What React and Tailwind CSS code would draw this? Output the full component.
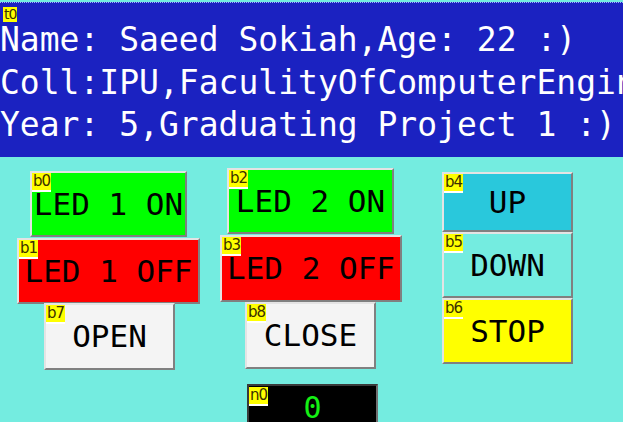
// Nextion-style HMI page: widgets sit at their own coordinates on the canvas

const MONO = "font-['DejaVu_Sans_Mono','Liberation_Mono',monospace]";

function Tag({ children, className = "" }) {
  return (
    <span
      className={`absolute bg-[#ffff00] border-b-2 border-white text-[#3b3000] text-[15px] leading-[17px] px-[1px] font-['DejaVu_Sans',sans-serif] tracking-[-1px] ${className}`}
    >
      {children}
    </span>
  );
}

function Btn({ tag, text, bg, pos }) {
  return (
    <div
      className={`absolute flex items-center justify-center border-2 border-t-[#e4e4e4] border-l-[#e4e4e4] border-r-[#808080] border-b-[#808080] ${bg} ${pos}`}
    >
      <Tag className="top-0 left-0">{tag}</Tag>
      <span className={`${MONO} text-[31px] leading-none text-black`}>{text}</span>
    </div>
  );
}

export default function App() {
  return (
    <div className="relative w-[623px] h-[422px] overflow-hidden bg-[#74ece0]">
      {/* t0 text panel */}
      <div className="absolute left-0 top-[2px] w-[623px] h-[155px] bg-[#1b22c1] border-t border-dotted border-[#9fb4ff] overflow-hidden">
        <Tag className="top-[4px] left-[3px] !text-[14px] !leading-[15px] !border-0">t0</Tag>
        <div className={`${MONO} text-[33px] leading-[42.5px] text-white whitespace-pre pt-[16px]`}>
          <div>Name: Saeed Sokiah,Age: 22 :)</div>
          <div>Coll:IPU,FaculityOfComputerEngineering</div>
          <div>Year: 5,Graduating Project 1 :)</div>
        </div>
      </div>

      <Btn tag="b0" text="LED 1 ON" bg="bg-[#00ff00]" pos="left-[30px] top-[171px] w-[157px] h-[66px]" />
      <Btn tag="b1" text="LED 1 OFF" bg="bg-[#ff0000]" pos="left-[17px] top-[238px] w-[183px] h-[66px]" />
      <Btn tag="b2" text="LED 2 ON" bg="bg-[#00ff00]" pos="left-[227px] top-[168px] w-[167px] h-[66px]" />
      <Btn tag="b3" text="LED 2 OFF" bg="bg-[#ff0000]" pos="left-[220px] top-[235px] w-[182px] h-[67px]" />

      <Btn tag="b4" text="UP" bg="bg-[#29c8dc]" pos="left-[442px] top-[172px] w-[131px] h-[60px]" />
      <Btn tag="b5" text="DOWN" bg="bg-[#74ece0]" pos="left-[442px] top-[232px] w-[131px] h-[66px]" />
      <Btn tag="b6" text="STOP" bg="bg-[#ffff00]" pos="left-[442px] top-[298px] w-[131px] h-[66px]" />

      <Btn tag="b7" text="OPEN" bg="bg-[#f4f4f4]" pos="left-[44px] top-[303px] w-[131px] h-[67px]" />
      <Btn tag="b8" text="CLOSE" bg="bg-[#f4f4f4]" pos="left-[245px] top-[302px] w-[131px] h-[67px]" />

      {/* n0 number, runs off the bottom of the page */}
      <div className="absolute left-[247px] top-[384px] w-[131px] h-[38px] bg-black border-2 border-b-0 border-t-[#3a3a3a] border-l-[#3a3a3a] border-r-[#707070] flex justify-center pt-[9px]">
        <Tag className="top-[1px] left-0">n0</Tag>
        <span className={`${MONO} text-[30px] leading-[26px] text-[#14f014]`}>0</span>
      </div>
    </div>
  );
}
